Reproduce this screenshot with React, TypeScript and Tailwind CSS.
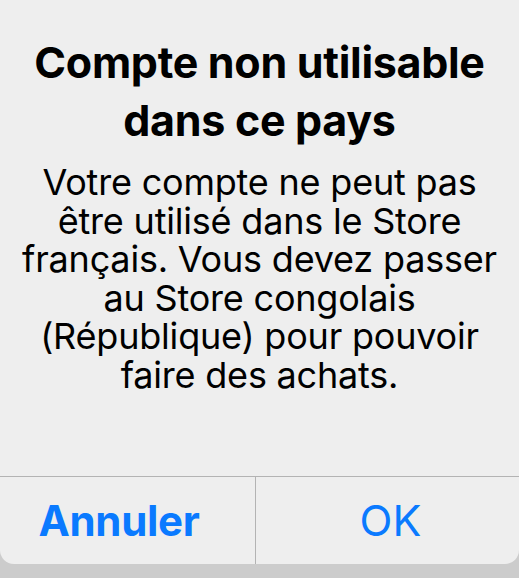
import React from "react";

export default function App() {
  return (
    <div className="w-[519px] h-[578px] bg-[#cccccc] overflow-hidden" style={{ fontFamily: "Inter, 'Liberation Sans', sans-serif" }}>
      <div className="h-[564px] bg-[#eeeeee] rounded-b-[14px] flex flex-col">
        <div className="flex-1 flex flex-col items-center pt-[33px]">
          <h1 className="text-[43px] leading-[58px] font-bold text-black text-center tracking-[-0.3px] whitespace-nowrap">
            Compte non utilisable
            <br />
            dans ce pays
          </h1>
          <p className="mt-[14px] text-[36px] leading-[38.5px] text-black text-center whitespace-nowrap tracking-[-0.2px]">
            Votre compte ne peut pas
            <br />
            être utilisé dans le Store
            <br />
            français. Vous devez passer
            <br />
            au Store congolais
            <br />
            (République) pour pouvoir
            <br />
            faire des achats.
          </p>
        </div>
        <div className="h-[88px] border-t border-[#b3b3b3] flex">
          <div className="w-[255px] pr-[17px] flex items-center justify-center text-[42px] font-bold text-[#0a7aff] tracking-[-0.3px]">Annuler</div>
          <div className="w-px bg-[#b3b3b3]" />
          <div className="flex-1 pl-[6px] flex items-center justify-center text-[43px] text-[#0a7aff]">OK</div>
        </div>
      </div>
    </div>
  );
}
